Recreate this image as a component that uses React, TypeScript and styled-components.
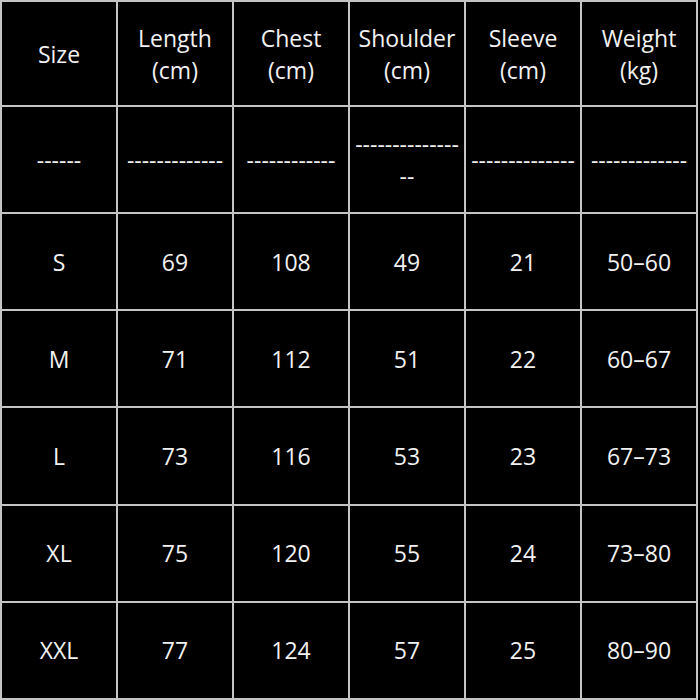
import styled, { createGlobalStyle } from "styled-components";

const GlobalStyle = createGlobalStyle`
  html, body {
    margin: 0;
    padding: 0;
    background: #000000;
  }
  body {
    font-family: "Open Sans", "Liberation Sans", sans-serif;
  }
`;

const headers = [
  "Size",
  "Length\n(cm)",
  "Chest\n(cm)",
  "Shoulder\n(cm)",
  "Sleeve\n(cm)",
  "Weight\n(kg)",
];

const dashes = [
  "------",
  "-------------",
  "------------",
  "--------------\n--",
  "--------------",
  "-------------",
];

const rows = [
  ["S", "69", "108", "49", "21", "50–60"],
  ["M", "71", "112", "51", "22", "60–67"],
  ["L", "73", "116", "53", "23", "67–73"],
  ["XL", "75", "120", "55", "24", "73–80"],
  ["XXL", "77", "124", "57", "25", "80–90"],
];

export default function App() {
  const all = [headers, dashes, ...rows];
  return (
    <>
      <GlobalStyle />
      <Table>
        {all.map((row, r) =>
          row.map((cell, c) => <Cell key={`${r}-${c}`}>{cell}</Cell>)
        )}
      </Table>
    </>
  );
}

const Table = styled.div`
  display: grid;
  grid-template-columns: repeat(6, 1fr);
  grid-template-rows: 103px 105px repeat(5, 1fr);
  gap: 2px;
  padding: 2px;
  box-sizing: border-box;
  width: 698px;
  height: 700px;
  margin-left: 0px;
  background: #c4c4c4;
`;

const Cell = styled.div`
  background: #000000;
  color: #f2f2f2;
  font-size: 23px;
  line-height: 32px;
  display: flex;
  align-items: center;
  justify-content: center;
  text-align: center;
  white-space: pre;
  overflow: hidden;
`;
